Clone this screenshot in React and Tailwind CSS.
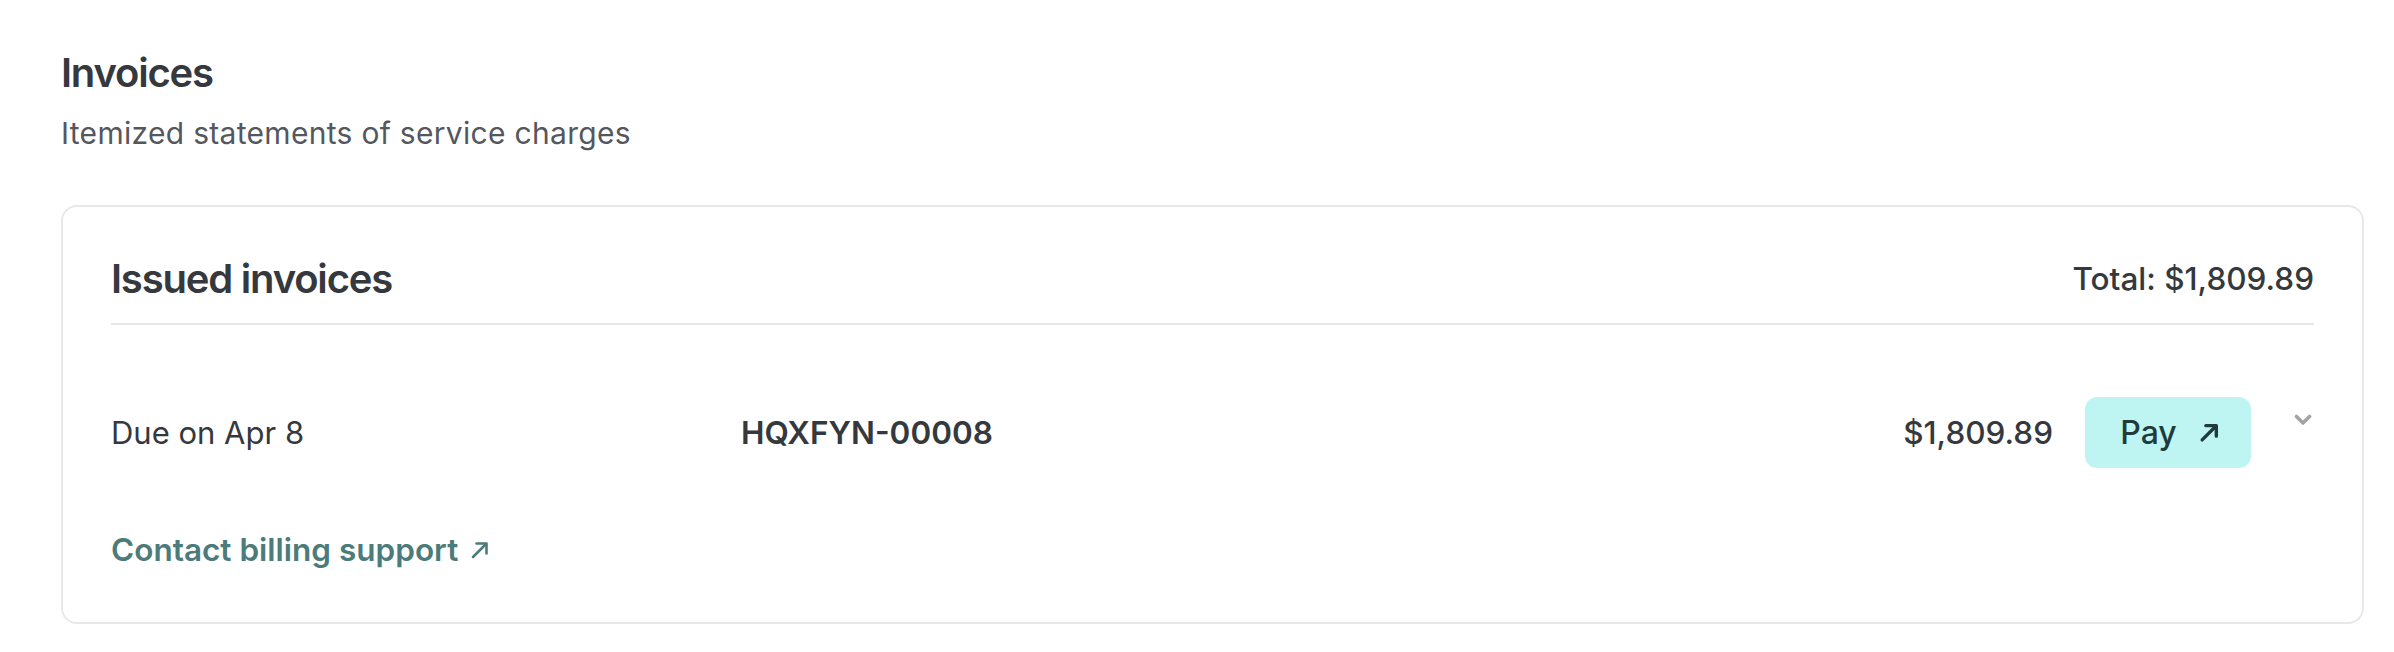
import React from 'react';

function ArrowUpRight({ className, strokeWidth = 2 }) {
  return (
    <svg viewBox="0 0 20 20" fill="none" stroke="currentColor" strokeWidth={strokeWidth} strokeLinecap="round" strokeLinejoin="round" className={className}>
      <path d="M3 17 16 4" />
      <path d="M6.5 3.5H16.5V13.5" />
    </svg>
  );
}

function Chevron({ className }) {
  return (
    <svg viewBox="0 0 18 12" fill="none" stroke="currentColor" strokeWidth="3.6" strokeLinecap="round" strokeLinejoin="round" className={className}>
      <path d="M2.5 2.5 9 9l6.5-6.5" />
    </svg>
  );
}

function InvoiceRow({ due, number, amount }) {
  return (
    <div className="flex items-center py-6">
      <div className="w-[630px] shrink-0 text-[31px] leading-[40px] text-[#35383d]">{due}</div>
      <div className="flex-1 text-[31.5px] leading-[40px] font-semibold text-[#35383d]">{number}</div>
      <div className="text-[31.5px] leading-[40px] font-medium text-[#35383d]">{amount}</div>
      <button className="ml-8 flex h-[71px] w-[166px] items-center justify-center gap-[22px] rounded-xl bg-[#bef5f3] pl-1 text-[32px] font-medium text-[#1f3b3c]">
        Pay
        <ArrowUpRight className="h-[21px] w-[21px]" strokeWidth={3.2} />
      </button>
      <div className="ml-[43px] flex w-[20px] self-start pt-[17px]">
        <Chevron className="h-[12px] w-[18px] text-[#a4a4a4]" />
      </div>
    </div>
  );
}

export default function App() {
  return (
    <div className="min-h-screen bg-white pl-[61px] pr-[30px] pt-[49px] font-['Inter',sans-serif]">
      <h1 className="text-[40px] leading-[48px] font-semibold tracking-[-0.03em] text-[#35383d]">Invoices</h1>
      <p className="mt-4 text-[30px] leading-[40px] tracking-[0.01em] text-[#55575e]">Itemized statements of service charges</p>

      <div className="mt-[52px] rounded-2xl border-2 border-[#e8e8e8] px-12 pt-12 pb-[52px]">
        <div className="flex items-center justify-between border-b-2 border-[#e8e8e8] pb-5">
          <h2 className="text-[40px] leading-[48px] font-semibold tracking-[-0.03em] text-[#35383d]">Issued invoices</h2>
          <span className="text-[31.5px] font-medium text-[#35383d]">Total: $1,809.89</span>
        </div>

        <div className="mt-12">
          <InvoiceRow due="Due on Apr 8" number="HQXFYN-00008" amount="$1,809.89" />
        </div>

        <a href="#" className="mt-[38px] inline-flex items-center gap-[12px] text-[31.5px] leading-[40px] font-semibold text-[#4b7b7b]">
          Contact billing support
          <ArrowUpRight className="h-[20px] w-[20px]" strokeWidth={2.6} />
        </a>
      </div>
    </div>
  );
}
